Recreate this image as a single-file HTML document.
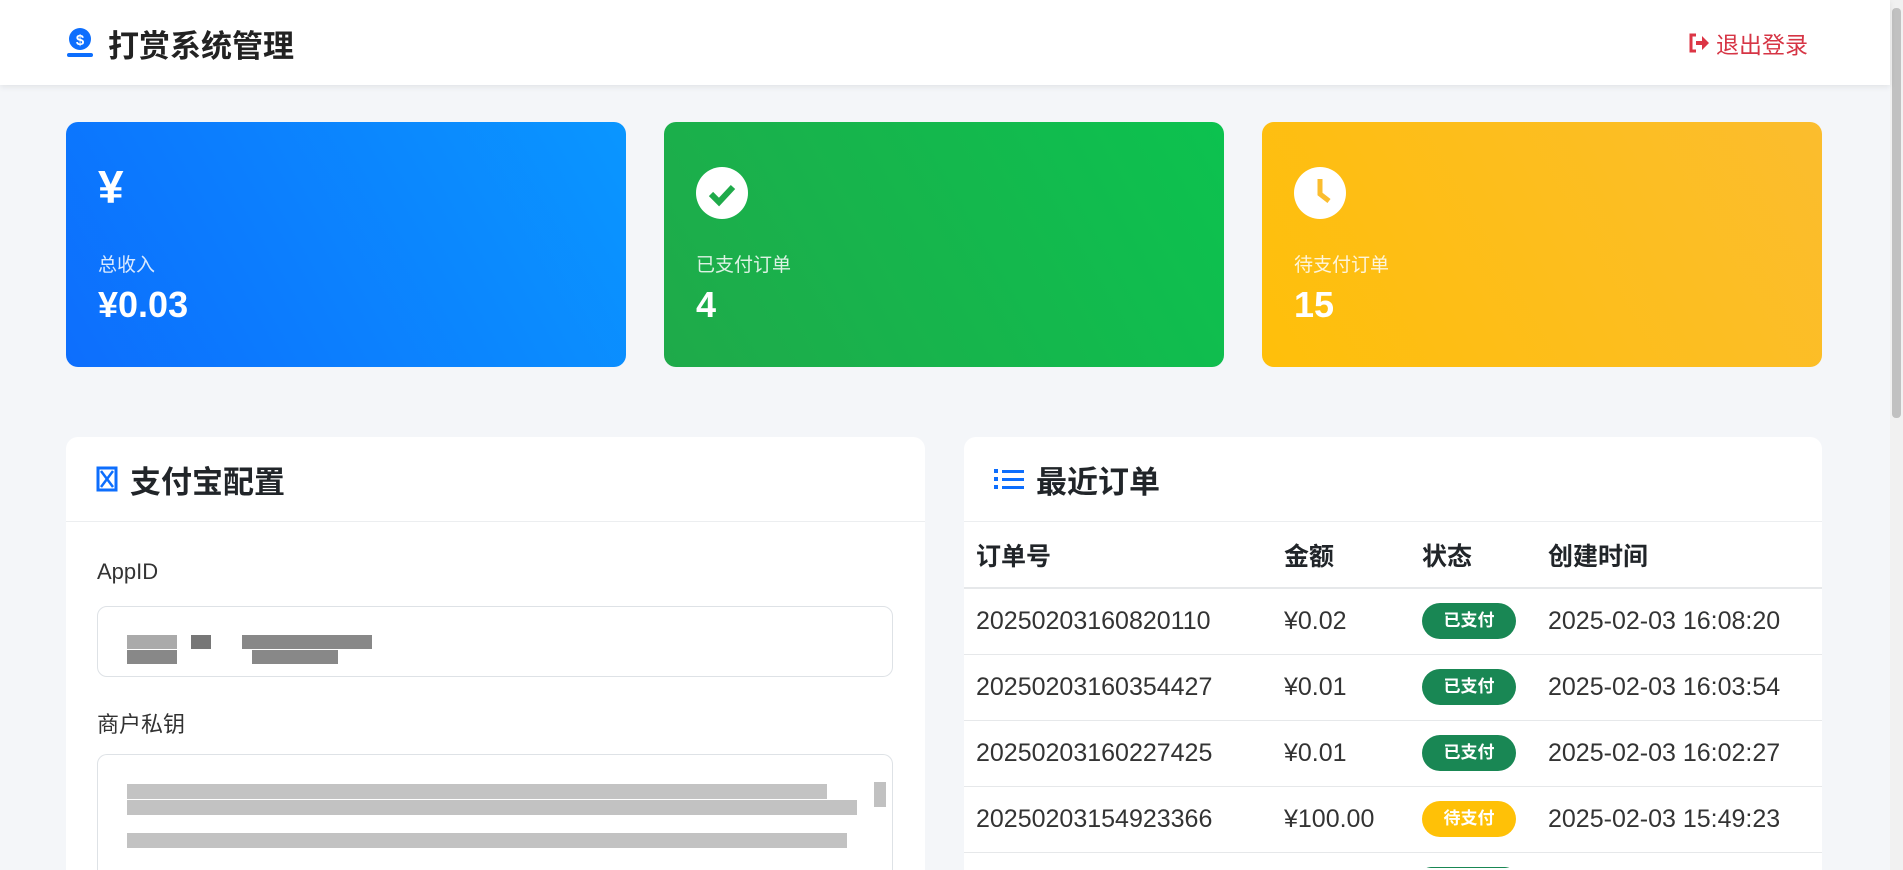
<!DOCTYPE html>
<html><head><meta charset="utf-8">
<style>
*{box-sizing:border-box;margin:0;padding:0}
html,body{width:1903px;height:870px;overflow:hidden}
body{background:#f4f6f9;font-family:"Liberation Sans","Noto Sans CJK SC",sans-serif;color:#212529;position:relative}
.hdr{position:absolute;left:0;top:0;width:1890px;height:85px;background:#fff;box-shadow:0 2px 6px rgba(0,0,0,.08);z-index:2}
.logo{position:absolute;left:65px;top:26px}
.title{position:absolute;left:108px;top:21px;font-size:31px;font-weight:bold;color:#222}
.out{position:absolute;left:1688px;top:26px;font-size:23px;color:#d63545;display:flex;align-items:center;gap:6px}
.card{position:absolute;top:122px;height:245px;width:560px;border-radius:12px;color:#fff}
.c1{left:66px;background:linear-gradient(60deg,#0d6efd,#0a96ff)}
.c2{left:664px;background:linear-gradient(60deg,#1faa4a,#0cc24f)}
.c3{left:1262px;background:linear-gradient(60deg,#ffbf0a,#fbbd2e)}
.card .ic{position:absolute;left:32px;top:45px}
.card .lb{position:absolute;left:32px;top:128px;font-size:19px;opacity:.85}
.card .vl{position:absolute;left:32px;top:162px;font-size:36px;font-weight:bold}
.panel{position:absolute;top:437px;background:#fff;border-radius:12px 12px 0 0;height:433px;overflow:hidden}
.pl{left:66px;width:859px}
.pr{left:964px;width:858px}
.ph{height:85px;border-bottom:1px solid #eceef0;display:flex;align-items:center;padding-left:30px;font-size:31px;font-weight:bold;gap:12px}
.lab{position:absolute;left:31px;font-size:22px;color:#333}
.inp{position:absolute;left:31px;width:796px;border:1px solid #dee2e6;border-radius:10px;background:#fff}
table{border-collapse:collapse;width:100%;font-size:25px}
th{text-align:left;font-weight:bold;height:66px;border-bottom:2px solid #e6e8ea;padding-left:12px}
td{height:66px;border-bottom:1px solid #e6e8ea;padding-left:12px;color:#333}
.bd{display:inline-block;width:94px;height:36px;line-height:36px;border-radius:18px;text-align:center;color:#fff;font-size:17px;font-weight:bold}
.g{background:#198754}.y{background:#ffc107}
.blk{position:absolute;background:#999}
.sb{position:absolute;left:1890px;top:0;width:13px;height:870px;background:#f1f1f1}
.sb div{position:absolute;left:2px;top:8px;width:9px;height:410px;background:#c1c1c1;border-radius:4px}
</style></head><body>
<div class="hdr">
 <svg class="logo" width="30" height="32" viewBox="0 0 30 32"><circle cx="15" cy="13" r="11" fill="#0d6efd"/><text x="15" y="19" font-size="15" fill="#fff" text-anchor="middle" font-family="Liberation Sans" font-weight="bold">$</text><rect x="2" y="27" width="26" height="4" rx="2" fill="#0d6efd"/></svg>
 <div class="title">打赏系统管理</div>
 <div class="out"><svg width="22" height="20" viewBox="0 0 22 20"><path d="M8 2H3v16h5" stroke="#dc3545" stroke-width="3" fill="none"/><path d="M8 8h6V3l7 7-7 7v-5H8z" fill="#dc3545"/></svg>退出登录</div>
</div>
<div class="card c1"><div class="ic" style="font-size:46px;font-weight:bold;top:38px">¥</div><div class="lb">总收入</div><div class="vl">¥0.03</div></div>
<div class="card c2"><svg class="ic" width="52" height="52" viewBox="0 0 52 52"><circle cx="26" cy="26" r="26" fill="#fff"/><path d="M15 27l8 8 14-15" stroke="#1faa4a" stroke-width="6" fill="none"/></svg><div class="lb">已支付订单</div><div class="vl">4</div></div>
<div class="card c3"><svg class="ic" width="52" height="52" viewBox="0 0 52 52"><circle cx="26" cy="26" r="26" fill="#fff"/><path d="M26 12v15l9 7" stroke="#fbbd2e" stroke-width="5" fill="none"/></svg><div class="lb">待支付订单</div><div class="vl">15</div></div>

<div class="panel pl">
 <div class="ph"><svg width="22" height="26" viewBox="0 0 22 26"><rect x="2" y="2" width="18" height="22" fill="none" stroke="#0d6efd" stroke-width="3"/><path d="M5 5l12 16M17 5L5 21" stroke="#0d6efd" stroke-width="2.5"/></svg>支付宝配置</div>
 <div class="lab" style="top:122px">AppID</div>
 <div class="inp" style="top:169px;height:71px"></div>
 <div class="blk" style="left:61px;top:198px;width:50px;height:14px;background:#aaa"></div>
 <div class="blk" style="left:61px;top:213px;width:50px;height:14px;background:#888"></div>
 <div class="blk" style="left:125px;top:198px;width:20px;height:14px;background:#777"></div>
 <div class="blk" style="left:176px;top:198px;width:130px;height:14px;background:#888"></div>
 <div class="blk" style="left:186px;top:213px;width:86px;height:14px;background:#888"></div>
 <div class="lab" style="top:270px">商户私钥</div>
 <div class="inp" style="top:317px;height:116px;border-bottom:none;border-radius:10px 10px 0 0"></div>
 <div class="blk" style="left:61px;top:347px;width:700px;height:15px;background:#aaa;opacity:.7"></div>
 <div class="blk" style="left:61px;top:363px;width:730px;height:15px;background:#999;opacity:.6"></div>
 <div class="blk" style="left:61px;top:396px;width:720px;height:15px;background:#999;opacity:.6"></div>
 <div style="position:absolute;left:808px;top:325px;width:12px;height:100px;"><div style="margin-top:20px;height:25px;background:#c1c1c1"></div></div>
</div>

<div class="panel pr">
 <div class="ph"><svg width="30" height="26" viewBox="0 0 30 26"><g fill="#0d6efd"><rect x="0" y="3" width="4" height="4"/><rect x="0" y="11" width="4" height="4"/><rect x="0" y="19" width="4" height="4"/><rect x="8" y="4" width="22" height="3"/><rect x="8" y="12" width="22" height="3"/><rect x="8" y="20" width="22" height="3"/></g></svg>最近订单</div>
 <table>
  <tr><th style="width:308px">订单号</th><th style="width:138px">金额</th><th style="width:126px">状态</th><th>创建时间</th></tr>
  <tr><td>20250203160820110</td><td>¥0.02</td><td><span class="bd g">已支付</span></td><td>2025-02-03 16:08:20</td></tr>
  <tr><td>20250203160354427</td><td>¥0.01</td><td><span class="bd g">已支付</span></td><td>2025-02-03 16:03:54</td></tr>
  <tr><td>20250203160227425</td><td>¥0.01</td><td><span class="bd g">已支付</span></td><td>2025-02-03 16:02:27</td></tr>
  <tr><td>20250203154923366</td><td>¥100.00</td><td><span class="bd y">待支付</span></td><td>2025-02-03 15:49:23</td></tr>
 </table>
 <div style="position:relative;height:15px;overflow:hidden"><div style="position:absolute;left:457px;top:14px;width:94px;height:10px;border-radius:18px 18px 0 0;background:#198754"></div></div>
</div>
<div class="sb"><div></div></div>
</body></html>
